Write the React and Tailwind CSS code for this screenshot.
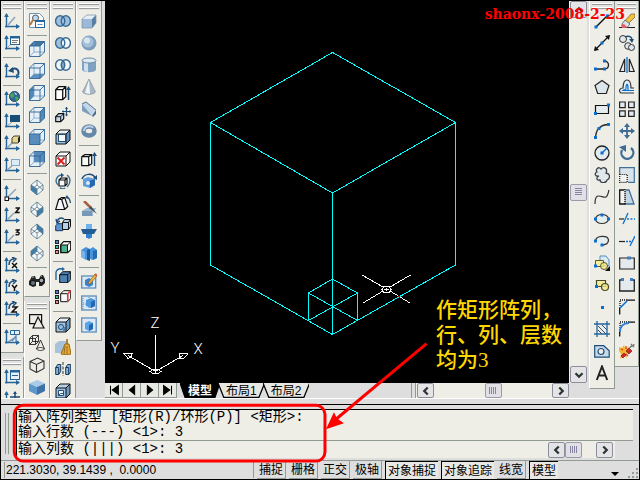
import { useState } from 'react'

const NAVY = '#1f4e79'
const AXIS = '#24659b'
const MID = '#5b8fbe'
const LIGHT = '#c3daee'
const PALE = '#e6f0f8'
const DOT = '#0b6fd0'

// ---------- shared icon parts ----------

function Axes({ children }) {
  return (
    <>
      <path d="M2.500 1v13.500M1 13.500h14" stroke={AXIS} strokeWidth="1.400" />
      <path d="M0.200 4L2.500 0l2.300 4zM12 11l4 2.500-4 2.500z" fill={AXIS} />
      {children}
    </>
  )
}

function Cube({ fill = 'none', top = fill, side = fill, front = fill, line = '#111' }) {
  return (
    <>
      <path d="M1 5l4-4h10l-4 4z" fill={top} />
      <path d="M11 5l4-4v10l-4 4z" fill={side} />
      <path d="M1 5h10v10H1z" fill={front} />
      <path d="M1 5l4-4h10v10l-4 4H1zM1 5h10v10M11 5l4-4" fill="none" stroke={line} strokeLinejoin="round" />
    </>
  )
}

function ViewCube({ shade, d }) {
  return (
    <>
      <path d="M.5 5l4.500-4.500h10.500V11L11 15.500H.5z" fill={PALE} />
      <path d={d} fill={shade} opacity=".9" />
      <path d="M5 .5V11h10.500M5 11L.5 15.500" stroke="#6d97bb" strokeWidth=".7" fill="none" />
      <path d="M.5 5L5 .5h10.500V11L11 15.500H.5zM.5 5H11v10.500M11 5L15.500.5" fill="none" stroke="#2f628f" strokeWidth=".9" />
    </>
  )
}

function IsoCube({ d }) {
  return (
    <>
      <path d="M8 1l6 5v5l-6 5-6-5V6z" fill="#f5f8fa" />
      <path d={d} fill="#3f7fae" />
      <path d="M8 1l6 5v5l-6 5-6-5V6zM2 6l6 4 6-4M8 10v6M8 1v5M2 11l6-5 6 5" fill="none" stroke="#527285" strokeWidth=".8" />
    </>
  )
}

function Rings({ left, right, mid }) {
  return (
    <>
      <circle cx="5" cy="8" r="4.800" fill={left} />
      <circle cx="11" cy="8" r="4.800" fill={right} />
      <path d="M8 4.300a4.800 4.800 0 010 7.400 4.800 4.800 0 010-7.400z" fill={mid} />
      <g fill="none" stroke="#376895" strokeWidth="1.400">
        <ellipse cx="5.200" cy="8" rx="4.600" ry="5.200" />
        <ellipse cx="10.800" cy="8" rx="4.600" ry="5.200" />
      </g>
    </>
  )
}

function Dots({ points }) {
  return points.map(([x, y]) => <rect key={`${x}-${y}`} x={x - 1.5} y={y - 1.5} width="3" height="3" fill={DOT} />)
}

function Spin({ letter }) {
  return (
    <Axes>
      <path d="M5 8c0-4 2-6 5-6M8 0l4 2-3 3" fill="none" stroke={NAVY} strokeWidth="1.500" />
      {letter === 'x' && <path d="M8 6l5 5M13 6l-5 5" stroke="#111" strokeWidth="1.500" />}
      {letter === 'y' && <path d="M8 6l2.500 3L13 6M10.500 9v3" stroke="#111" strokeWidth="1.500" fill="none" />}
      {letter === 'z' && <path d="M8 6h5l-5 5h5" stroke="#111" strokeWidth="1.500" fill="none" />}
    </Axes>
  )
}

function Swatches() {
  return (
    <g strokeWidth="1" stroke="#222">
      <rect x=".5" y="1.500" width="3" height="3" fill="#3b8de0" />
      <rect x=".5" y="6.500" width="3" height="3" fill="#35c09a" />
      <rect x=".5" y="11.500" width="3" height="3" fill="#f3878c" />
    </g>
  )
}

// ---------- toolbars: null is a separator ----------

const ucsTools = [
  ['UCS', <Axes><path d="M4 12l7-8" stroke="#8aa3b8" strokeWidth="1.500" /></Axes>],
  ['Display UCS', <Axes><path d="M3 13l4-4" stroke="#8aa3b8" /><rect x="6.500" y="1.500" width="9" height="8" fill="#fff" stroke={AXIS} /><path d="M6 2.500h10" stroke={AXIS} strokeWidth="2" /><path d="M8 5.500h6M8 7.500h5" stroke="#777" /></Axes>],
  null,
  ['UCS previous', <Axes><path d="M14 12c2-6-3-8-7-5" fill="none" stroke={NAVY} strokeWidth="2" /><path d="M4 8l5-4 1 6z" fill={NAVY} /></Axes>],
  null,
  ['World UCS', <Axes><circle cx="10.500" cy="5.500" r="5" fill="#2d6a9f" stroke="#254663" /><path d="M6 4c2-3 4-2 4 0s-1 3-3 3zM11 6c3-1 4 0 3 3l-2 1z" fill="#4da64c" /><path d="M10 1l3 2-1 1z" fill="#fff" /></Axes>],
  ['Object UCS', <Axes><rect x="6" y="2" width="10" height="7" fill="#184d78" /><path d="M3 13l5-4" stroke="#8aa3b8" /></Axes>],
  ['Face UCS', <Axes><path d="M3 13l6-6" stroke="#8aa3b8" strokeWidth="1.400" /><path d="M8 3l2-2h6v5l-2 2H8z" fill="#e7d68a" stroke="#444" /><path d="M14 3l2-2v5l-2 2z" fill="#222" /></Axes>],
  ['View UCS', <Axes><path d="M3 13l5-4" stroke="#8aa3b8" strokeWidth="1.400" /><rect x="7.500" y="2.500" width="8" height="6" fill="#dcebf7" stroke="#7ca6cb" /></Axes>],
  null,
  ['Origin UCS', <Axes><path d="M4 12l8-8" stroke="#8aa3b8" strokeWidth="1.400" /><rect x="1" y="12" width="3.500" height="3.500" fill="#fff" stroke="#111" /></Axes>],
  ['Z axis vector', <Axes><path d="M4 12l6-6" stroke="#8aa3b8" strokeWidth="1.400" /><path d="M11.500 1H15.200l-3.500 4.500H15.700" fill="none" stroke="#111" strokeWidth="1.500" /></Axes>],
  ['3 point UCS', <Axes><path d="M4 12l6-6" stroke="#8aa3b8" strokeWidth="1.400" /><path d="M11.500 1H15l-2 2c3.500 0 2.500 4-1.500 2.500" fill="none" stroke="#111" strokeWidth="1.400" /></Axes>],
  null,
  ['X rotate UCS', <Spin letter="x" />],
  ['Y rotate UCS', <Spin letter="y" />],
  ['Z rotate UCS', <Spin letter="z" />],
  null,
  ['Apply UCS', <Axes><path d="M6.500 1.500h9v4h-9zM10.500 1.500v4" fill="#e5f0f8" stroke={AXIS} /><path d="M4 13l8-5M8 12l4-5v6" stroke={MID} fill="none" strokeWidth="1.400" /></Axes>],
]

const ucsTools2 = [
  ['Named UCS', <Axes><rect x="6.500" y="1.500" width="9" height="9" fill="#e9f2f9" stroke={AXIS} /><path d="M6 2.500h10" stroke={AXIS} strokeWidth="2" /><path d="M8 6.500h6" stroke={AXIS} /></Axes>],
  ['Move UCS', <Axes><path d="M11 1v10M6 6h10" stroke={NAVY} strokeWidth="1.500" /><path d="M9 3l2-3 2 3zM9 9l2 3 2-3z" fill={NAVY} /></Axes>],
]

const viewTools = [
  ['Named views', <><path d="M.5.5h10l4 4v10H.5z" fill="#f8fbfd" stroke="#6d93b5" /><circle cx="6.500" cy="5" r="3" fill={LIGHT} stroke="#555" /><path d="M4 7l-3 5" stroke="#b9783d" strokeWidth="2" /><rect x="6.500" y="7.500" width="9" height="7" fill="#fff" stroke={AXIS} /><path d="M6 8h10" stroke={AXIS} strokeWidth="2" /><path d="M8.500 11.500h5" stroke={MID} /></>],
  null,
  ['Top', <ViewCube shade="#2f6898" d="M.5 5L5 .5h10.500L11 5z" />],
  ['Bottom', <ViewCube shade="#4d86b8" d="M.5 15.500L5 11h10.500L11 15.500z" />],
  ['Left', <ViewCube shade="#3f7cb0" d="M.5 5L5 .5V11L.5 15.500z" />],
  ['Right', <ViewCube shade="#3f7cb0" d="M11 5L15.500.5V11L11 15.500z" />],
  ['Front', <ViewCube shade="#4580b6" d="M.5 5H11v10.500H.5z" />],
  ['Back', <ViewCube shade="#4580b6" d="M5 .5h10.500V11H5z" />],
  null,
  ['SW isometric', <IsoCube d="M2 6l6 4v6l-6-5z" />],
  ['SE isometric', <IsoCube d="M8 10l6-4v5l-6 5z" />],
  ['NE isometric', <IsoCube d="M8 1l6 5v5l-6-5z" />],
  ['NW isometric', <IsoCube d="M8 1v5l-6 5V6z" />],
  null,
  ['Camera', <><path d="M1 7l2-4h3l1 3h3l2-4h2l2 4v4l-3 3h-3V9H7v4l-3 1-4-2V8z" fill="#242424" /><circle cx="4" cy="10" r="2.600" fill="#5f7078" stroke="#111" /><circle cx="12.500" cy="7.500" r="2.300" fill="#9ba8b0" stroke="#111" /><path d="M3 4h2M12 3h1" stroke="#b6c5cf" /></>],
]

const styleTools = [
  ['2D wireframe', <g fill="none" stroke="#111" strokeWidth="1.200"><path d="M.6 1.600h12v9H.6z" /><path d="M9 4l6 11H4z" fill="#eeede6" /></g>],
  ['3D wireframe', <g fill="none" stroke="#222" strokeWidth=".9"><path d="M.5 3.500l3-3h6v6l-3 3h-6zM.5 3.500h6v6M6.500 3.500l3-3M3.500.5v6h6M3.500 6.500l-3 3" /><path d="M11.500 5l4 9c-2 2-6 2-8 0zM7.500 14c2-2 6-2 8 0" /></g>],
  ['Hidden', <path d="M1 4.500L8.500 1 15 4v7.500L7.500 15.500 1 12zM1 4.500l6.500 3L15 4M7.500 7.500v8" fill="none" stroke="#333" strokeWidth="1.100" />],
  ['Realistic', <><path d="M0 4.500L8.500 1 16 4.500 8 8z" fill="#a9cbe8" /><path d="M0 4.500L8 8v8l-8-4z" fill="#5e97ca" /><path d="M16 4.500L8 8v8l8-4z" fill="#3f73a8" /></>],
]

const editTools = [
  ['Union', <Rings left="#9fc0dd" right="#9fc0dd" mid="#9fc0dd" />],
  ['Subtract', <Rings left="#9fc0dd" right="#f4f7f8" mid="#f4f7f8" />],
  ['Intersect', <Rings left="#f4f7f8" right="#f4f7f8" mid="#7ba7ce" />],
  null,
  ['Extrude faces', <><path d="M.7 4.700l3-3h7v10l-3 3h-7z M.7 4.700h7v10M7.700 4.700l3-3" fill="#fff" stroke="#111" strokeWidth="1.300" /><path d="M13.500 15V4" stroke={NAVY} strokeWidth="1.500" /><path d="M11 5l2.500-4L16 5z" fill={NAVY} /></>],
  ['Move faces', <><path d="M.7 9.700l3-3h5v5l-3 3h-5z" fill={LIGHT} stroke="#111" strokeWidth="1.200" /><path d="M.7 9.700h5v5M5.700 9.700l3-3" fill="none" stroke="#111" /><path d="M11.500 0v9M7 4.500h9" stroke={NAVY} strokeWidth="1.200" /><path d="M10 2l1.500-2L13 2zM10 7.500l1.500 2 1.500-2zM14.500 3L16 4.500 14.500 6zM8.500 3L7 4.500 8.500 6z" fill={NAVY} /></>],
  ['Offset faces', <><Cube front="#9bbfdf" top="#e9f1f7" side="#5b8fbe" /><rect x="3.500" y="5.500" width="7" height="7" fill="#f6f8fa" stroke={NAVY} /></>],
  ['Delete faces', <><Cube fill="#fafafa" /><path d="M2.500 6.500l7 7M9.500 6.500l-7 7" stroke="#e32222" strokeWidth="2" /></>],
  ['Rotate faces', <><path d="M4 7l2-2h6v6l-2 2H4zM4 7h6v6M10 7l2-2" fill="#f7f9fa" stroke="#111" strokeWidth="1.200" /><path d="M3 12C-1 8 2 2 7 2M12 2c4 3 4 8 0 12M5 15c2 1 4 1 5 0" fill="none" stroke="#3d7099" strokeWidth="1.400" /><path d="M6 0l3 2-3 3z" fill={NAVY} /></>],
  ['Taper faces', <><path d="M.7 14.500l3-10 3-2h3l3 9-3 3zM3.700 4.500h3l3 10M6.700 4.500l3-2" fill="#f5f8fa" stroke="#111" strokeWidth="1.200" /><path d="M11 2c3 0 4 3 4.500 6" fill="none" stroke={NAVY} strokeWidth="1.300" /><path d="M12 0l-2 3 4 1z" fill={NAVY} /></>],
  ['Copy faces', <><path d="M.7 8.700l2-2h5v7H.7z" fill="#5b94cf" stroke="#183a63" /><path d="M7.500 5.500l2-3h6v7l-2 3h-6z" fill="#b4d0ea" stroke="#111" /><path d="M7.500 5.500h6v7M13.500 5.500l2-3" fill="none" stroke="#111" /><path d="M2 5c1-4 4-5 7-3M1 2l1 4 3-2" fill="none" stroke={NAVY} strokeWidth="1.400" /></>],
  ['Color faces', <><Swatches /><path d="M5.700 5.700l3-3h7v8l-3 3h-7z" fill="#fafafa" stroke="#111" strokeWidth="1.200" /><path d="M6 6h6.500v7.500H6z" fill="#4bb08b" stroke="#111" /><path d="M12.500 6l3-3" stroke="#111" /></>],
  null,
  ['Copy edges', <><path d="M4.700 7.700l3-3h8v8l-3 3h-8z" fill="#4d82b4" stroke="#111" /><path d="M4.700 7.700h8v8M12.700 7.700l3-3" fill="none" stroke="#111" /><path d="M1 13V5M1 5c1-3 3-4 7-3" fill="none" stroke={AXIS} strokeWidth="1.400" /><path d="M7 0l3 2-3 2z" fill={AXIS} /></>],
  ['Color edges', <><Swatches /><path d="M5.700 4.700l3-3h7v8l-3 3h-7zM5.700 4.700h7v8" fill="#fafafa" stroke="#111" /><path d="M12.700 12.700v-8l3-3" stroke="#e33" strokeWidth="1.500" fill="none" /></>],
  null,
  ['Imprint', <><Cube front="#9cc1df" top={PALE} side="#6a9cc6" /><circle cx="6" cy="10" r="2.500" fill="none" stroke={NAVY} /><path d="M8 13h2v-3" stroke={NAVY} fill="none" /></>],
  ['Clean', <><path d="M0 5l4-3h9v8l-4 4H0z" fill="#a8c2da" /><path d="M12 0v5" stroke="#a06a20" strokeWidth="1.500" /><path d="M10 5h4l2 10c-3 1-7 1-10 0z" fill="#e5ab36" stroke="#99691b" /><path d="M9 15l1-8M12 15V7" stroke="#9b6d1c" /></>],
  ['Separate', <><path d="M.7 6.500l2-3h3v7l-2 3h-3zM.7 6.500h3v7" fill="#8ab4da" stroke="#153a5e" /><path d="M10.700 6.500l2-3h3v7l-2 3h-3zM10.700 6.500h3v7" fill="#8ab4da" stroke="#153a5e" /><path d="M8 1v14" stroke="#333" strokeDasharray="3 1.500" /></>],
  ['Shell', <><Cube front="#9cc1df" top="#b7d0e5" side="#6a9cc6" /><path d="M3.500 7.500h5v5h-5z" fill="#f3f6f8" stroke={NAVY} /><path d="M3.500 12.500l2-2h3" stroke={NAVY} fill="none" /></>],
]

const solidTools = [
  ['Box', <><path d="M1 6l5-4h9l-4 4z" fill="#e5eef6" /><path d="M1 6h10v9H1z" fill="#9bb9d6" /><path d="M11 6l4-4v8l-4 5z" fill="#557da6" /><path d="M1 6l5-4h9v8l-4 5H1z" fill="none" stroke="#7991a8" strokeWidth=".7" /></>],
  ['Sphere', <><circle cx="8" cy="8" r="7.500" fill="#7c9dbd" /><circle cx="7" cy="7" r="5.600" fill="#a4bfd8" /><circle cx="6" cy="5.500" r="3" fill="#d7e5f0" /></>],
  ['Cylinder', <><path d="M1 3v10c2 3 12 3 14 0V3z" fill="#7fa1c2" /><path d="M3 4h4v11C5 15 3 14 3 13z" fill="#d2e0ed" /><ellipse cx="8" cy="3.500" rx="7" ry="2.500" fill="#dfe9f2" stroke="#6d8dab" /></>],
  ['Cone', <><path d="M8 0l6.500 13c-2 3-11 3-13 0z" fill="#a9b8c5" /><path d="M8 0L4 14c2 1 3 1 5 1z" fill="#eff4f7" /><path d="M8 0l6.500 13c-2 3-11 3-13 0z" fill="none" stroke="#7f8f9c" strokeWidth=".7" /></>],
  ['Wedge', <><path d="M1 3l4-2 10 8-4 6z" fill="#c3d7e8" /><path d="M1 3v7l10 5z" fill="#7d9dbc" /><path d="M11 15l4-6v4l-3 3z" fill="#47698b" /><path d="M1 3l4-2 10 8" fill="none" stroke="#516f8c" /></>],
  ['Torus', <><ellipse cx="8" cy="8" rx="5.500" ry="4.500" fill="none" stroke="#6588aa" strokeWidth="4.500" /><path d="M3 8c0-5 7-6 9-3" fill="none" stroke="#bfd3e5" strokeWidth="2" /></>],
  null,
  ['Extrude', <><path d="M.7 5.700l3-2h7v9l-3 2h-7zM.7 5.700h7v9M7.700 5.700l3-2" fill="#f7f9fa" stroke="#111" strokeWidth="1.200" /><path d="M13.500 15V4" stroke={NAVY} strokeWidth="1.400" /><path d="M11 5l2.500-4L16 5z" fill={NAVY} /></>],
  ['Revolve', <><path d="M2 6l5-2 7 2v6l-5 3-7-2z" fill="#5e9edc" /><path d="M8 8l6-2v6l-5 3z" fill="#2467b3" /><circle cx="7" cy="10" r="2" fill="#dcebf7" /><path d="M1 6c2-6 11-6 13-1" fill="none" stroke={NAVY} strokeWidth="1.500" /><path d="M16 2v5l-4-2z" fill={NAVY} /></>],
  null,
  ['Slice', <><path d="M1 10l5-3h9l-3 5v3H1z" fill="#9ab6d0" /><path d="M1 10h10v5H1z" fill="#7898b7" /><path d="M3 0l7 7" stroke="#a85c41" strokeWidth="2.500" /><path d="M8 7l2-2 6 8z" fill="#474f57" /></>],
  ['Section', <><path d="M5 1h6v14H5z" fill="#4d9ae0" /><path d="M0 6h16l-3 5H2z" fill="#235d94" /><path d="M5 1h6v5H5z" fill="#6db2ec" /><path d="M5 11h6v3l-3 2-3-2z" fill="#2f80cf" /></>],
  ['Interfere', <><path d="M0 5l5-3 4 2 3-2 4 3v8l-5 2-3-2-3 2-5-3z" fill="#4692dc" /><path d="M6 5l3-1v12l-3-1z" fill="#1e5796" /><path d="M0 5l4 2v7l-4-2z" fill="#77b4ec" /><path d="M12 6l4-1v8l-4 2z" fill="#2869b1" /></>],
  null,
  ['Setup drawing', <><rect x=".7" y="3" width="14" height="12" fill="#dce9f4" stroke={MID} strokeWidth="1.300" /><path d="M4 7l4-2 4 2v5l-4 2-4-2z" fill="#3b82c9" /><path d="M7 10l7-9 2 2-7 8z" fill="#edb23e" stroke="#8a5a1b" strokeWidth=".6" /><path d="M14 1l2 2" stroke="#dc5a3a" strokeWidth="2" /></>],
  ['Setup view', <><rect x=".7" y="1" width="14.500" height="14" fill="#dce9f4" stroke={MID} strokeWidth="1.300" /><path d="M2 3v11M2 9h12M8 2v12" stroke={MID} strokeDasharray="1 1" /><path d="M5 5l5-2 4 2v6l-4 2-5-2z" fill="#4c98dc" /><path d="M10 7l4-2v6l-4 2z" fill="#2469b0" /></>],
  ['Setup profile', <><rect x=".7" y="1" width="14.500" height="14" fill="#dce9f4" stroke={MID} strokeWidth="1.300" /><path d="M4 6l4-2 4 2v6l-4 2-4-2z" fill="#59a4e4" /><path d="M8 8l4-2v6l-4 2z" fill="#1f68b4" /></>],
]

const drawTools = [
  ['Line', <><path d="M2 14L14 2" stroke="#111" strokeWidth="1.400" /><Dots points={[[2, 14], [13.5, 3]]} /></>],
  ['Construction line', <><path d="M1 15L15 1" stroke="#111" strokeWidth="1.300" /><path d="M0 16l1-5 4 4zM16 0l-5 1 4 4z" fill="#111" /><Dots points={[[8, 8]]} /></>],
  ['Polyline', <><path d="M2 12h8c6 0 6-8 0-8" fill="none" stroke="#222" strokeWidth="1.300" /><Dots points={[[1.5, 12], [10.5, 12], [10.5, 4]]} /></>],
  ['Polygon', <path d="M8 1.500l7 5-2.700 8H3.700L1 6.500z" fill="#dce6ec" stroke="#222" strokeWidth="1.200" />],
  ['Rectangle', <><path d="M1.500 4.500h13v8h-13z" fill="#e5ebef" stroke="#111" strokeWidth="1.200" /><Dots points={[[1.5, 12.5], [14.5, 4]]} /></>],
  ['Arc', <><path d="M1.500 14C2 7 6 2 14 1.500" fill="none" stroke="#333" strokeWidth="1.300" /><Dots points={[[1.5, 14.5], [5, 5.5], [14.5, 1.5]]} /></>],
  ['Circle', <><circle cx="8" cy="8" r="7" fill="#e2eaef" stroke="#222" strokeWidth="1.300" /><path d="M8 8l5-5" stroke={DOT} strokeWidth="1.500" /><Dots points={[[8, 8]]} /></>],
  ['Revision cloud', <path d="M5 9C1 10 0 6 3 5 1 2 5-1 7 2c3-3 7 0 5 4 5 1 4 6 1 7-1 4-7 3-7 0-4 1-4-3-1-4z" fill="#e1e7ea" stroke="#3a4147" strokeWidth="1.300" />],
  ['Spline', <path d="M1 15C1 1 9 10 12 8c2-1 2-4 3-7" fill="none" stroke="#333" strokeWidth="1.200" />],
  ['Ellipse', <><ellipse cx="8" cy="8" rx="6.500" ry="4.500" fill="#e6edf0" stroke="#333" strokeWidth="1.200" /><Dots points={[[1.5, 8], [8, 4], [14.5, 8]]} /></>],
  ['Ellipse arc', <><path d="M1.500 8C2 2 14 2 14.500 7c0 4-3 5-7 5" fill="#e6edf0" stroke="#333" strokeWidth="1.300" /><Dots points={[[1.5, 8], [8, 12]]} /></>],
  ['Insert block', <><path d="M6 1h6l3 4v6H6z" fill="#dbe9f4" stroke={MID} /><path d="M1.500 5.500h8v6h-8z" fill="#f5ee9a" stroke="#5c5a28" /><circle cx="10" cy="11" r="3.500" fill="#f3e986" fillOpacity=".8" stroke="#5c5a28" /><Dots points={[[1.5, 11]]} /><path d="M16 11v5h-5z" fill="#111" /></>],
  ['Make block', <><path d="M2.500 3.500h9v6h-9z" fill="#f5ee9a" stroke="#484a2a" strokeWidth="1.200" /><circle cx="11" cy="10" r="3.500" fill="#f3e986" fillOpacity=".8" stroke="#484a2a" strokeWidth="1.200" /><Dots points={[[2.5, 9.5]]} /></>],
  ['Point', <Dots points={[[8.5, 8.5]]} />],
  ['Hatch', <><path d="M3 3h10v10H3z" fill="#e5eef4" /><path d="M4 9l4 4M4 5l8 8M8 4l5 5" stroke="#222" strokeWidth=".8" /><path d="M3 0v16M13 0v16M0 3h16M0 13h16" stroke={AXIS} strokeWidth="1.300" /></>],
  ['Region', <><path d="M.7 2.700h9l5.500 5v6.500H.7z" fill="#c9dbea" stroke={NAVY} strokeWidth="1.200" /><circle cx="7" cy="8.500" r="3" fill="#eeede6" stroke={NAVY} strokeWidth="1.200" /></>],
  ['Multiline text', <path d="M2.800 15L8 1.500 13.200 15M4.800 10.500h6.400" fill="none" stroke="#222" strokeWidth="2" />],
]

const modifyTools = [
  ['Erase', <><path d="M0 14.500h16" stroke="#222" /><path d="M5 9L12 1h4v3l-8 8z" fill="#efc23f" stroke="#745b25" strokeWidth=".7" /><path d="M3 11l3-4 5 4-3 3.500H5z" fill="#d7e3ee" stroke="#555" strokeWidth=".8" /><path d="M2 12l3-1 3 3-2 1H3z" fill="#e35d62" /></>],
  ['Copy', <><circle cx="4" cy="4" r="3.500" fill="#e1e8ed" stroke="#333" /><circle cx="9" cy="11" r="3.300" fill="#e1e8ed" stroke="#333" /><circle cx="12.500" cy="12.500" r="3" fill="#dce6ec" stroke="#333" /><path d="M6 2c4-2 7 0 7 3" fill="none" stroke={NAVY} strokeWidth="1.500" /><path d="M10 4h5l-2 4z" fill={NAVY} /></>],
  ['Mirror', <><path d="M.7 14.500h5V2zM15.300 14.500h-5V2z" fill="#e2e9ed" stroke="#222" strokeWidth="1.200" /><path d="M8 0v16" stroke={DOT} strokeWidth="1.300" /></>],
  ['Offset', <><path d="M15 14H2c-3-2-1-5 2-5C4 3 6 1 8 1s4 2 4 8h3" fill="#e2edf4" stroke="#333" strokeWidth="1.200" /><path d="M15 11.500H4c1-1 3 0 3-2 0-5 2-6 2 0v2" fill="none" stroke={DOT} strokeWidth="1.200" /></>],
  ['Array', <g fill="#e2eaef" stroke="#222" strokeWidth="1.200"><path d="M.6 1h5.600v5.600H.6zM9.600 1h5.600v5.600H9.600zM.6 9.800h5.600v5.600H.6zM9.600 9.800h5.600v5.600H9.600z" /></g>],
  ['Move', <><path d="M8 2v12M2 8h12" stroke="#3d6c94" strokeWidth="1.800" /><path d="M5 4l3-4 3 4zM5 12l3 4 3-4zM4 5L0 8l4 3zM12 5l4 3-4 3z" fill="#3d6c94" /></>],
  ['Rotate', <><path d="M12 3a6 6 0 11-9 2" fill="none" stroke="#3d6c94" strokeWidth="2.300" /><path d="M0 2l7-2v7z" fill="#3d6c94" /></>],
  ['Scale', <><path d="M.7 .7h14.600v14.600H.7z" fill="#d8e3ea" /><path d="M.7 7V.7h14.600v14.600H9" fill="none" stroke="#40719b" strokeWidth="1.200" /><path d="M.7 7.500h7.500v7.800H.7z" fill="#f3f4f2" stroke="#111" strokeDasharray="1 1" strokeWidth="1.200" /></>],
  ['Stretch', <><path d="M6 1h4l5 14H6z" fill="#c4d6e4" stroke="#40719b" strokeWidth="1.300" /><path d="M.7 1H6v14H.7z" fill="#f3f4f2" stroke="#111" strokeWidth="1.300" /><path d="M6 1v14" stroke="#fff" strokeDasharray="1 1" strokeWidth="1.300" /></>],
  ['Trim', <><path d="M0 8h5" stroke="#222" strokeWidth="1.200" /><path d="M8 8h8" stroke={DOT} strokeDasharray="2 1.500" strokeWidth="1.300" /><path d="M4 13l5-11" stroke={DOT} strokeWidth="1.300" /></>],
  ['Extend', <><path d="M0 8.500h6" stroke="#222" strokeWidth="1.200" /><path d="M7 8.500h5" stroke={DOT} strokeDasharray="2 1" strokeWidth="1.300" /><path d="M11 13l5-10" stroke={DOT} strokeWidth="1.300" /></>],
  ['Break at point', <><path d="M.7 3h14.600v11H.7z" fill="#e5eaed" stroke="#222" strokeWidth="1.200" /><rect x="8" y="1.500" width="4" height="3" fill="#407dc1" /></>],
  ['Break', <><path d="M1 3h14v11H1z" fill="#e5eaed" /><path d="M2.500 3H.7v11h14.600V3h-2" fill="none" stroke="#222" strokeWidth="1.300" /><rect x="2" y="1" width="3" height="3" fill="#407dc1" /><rect x="11" y="1" width="3" height="3" fill="#407dc1" /></>],
  ['Chamfer', <><path d="M1 9V1h7" fill="none" stroke="#111" strokeDasharray="1 1" strokeWidth="1.300" /><path d="M.7 15.500V9M8 1.200h8" fill="none" stroke="#111" strokeWidth="1.300" /><path d="M1 9l7-7" stroke={DOT} strokeWidth="1.600" /></>],
  ['Fillet', <><path d="M1 11V1h9" fill="none" stroke="#111" strokeDasharray="1 1" strokeWidth="1.300" /><path d="M.7 15.500V11M10 1.200h6" fill="none" stroke="#111" strokeWidth="1.300" /><path d="M1 11c0-6 4-9 9-9" fill="none" stroke="#2d7bd6" strokeWidth="2" /></>],
  ['Explode', <><path d="M0 4l3 1 2-3 1 3 4-1-2 4 3 2-4 1 1 4-3-2-4 3 1-5-2-3z" fill="#f4b52f" /><path d="M2 6l2 1M7 3v3M9 13l-2-2" stroke="#e32f25" strokeWidth="1.200" /><path d="M2 13l3-3 2 2-3 3zM7 8l3-3 3 3-3 3z" fill="#d22a22" stroke="#5b1412" strokeWidth=".6" /><path d="M11 5c0-3 4-1 4-4M12 1l1 1M15 4l-1-1" fill="none" stroke="#777" strokeWidth="1.400" /></>],
]

function ToolGroup({ label, tools, className = '' }) {
  return (
    <div
      role="toolbar"
      aria-label={label}
      className={`shrink-0 border-r border-b border-r-[#929a94] border-b-[#929a94] bg-[#eeede6] pb-1 ${className}`}
    >
      <div className="flex h-[9px] flex-col justify-center gap-[2px] bg-[#e2e2e0] px-0.5">
        <span className="h-[2px] border-b border-[#9a9a9a] bg-white" />
        <span className="h-[2px] border-b border-[#9a9a9a] bg-white" />
      </div>
      {tools.map((tool, i) =>
        tool ? (
          <button key={tool[0]} type="button" aria-label={tool[0]} className="flex h-[22px] w-full items-center justify-center">
            <svg viewBox="0 0 16 16" className="size-4 shrink-0">{tool[1]}</svg>
          </button>
        ) : (
          <div key={i} className="mx-0.5 flex h-1.5 items-center">
            <span className="h-px w-full bg-[#929a94]" />
          </div>
        )
      )}
    </div>
  )
}

const CHEVRONS = {
  up: 'M4 10l4-4 4 4',
  down: 'M4 6l4 4 4-4',
  left: 'M10 4L6 8l4 4',
  right: 'M6 4l4 4-4 4',
}

function ScrollButton({ dir, className = 'size-[17px]' }) {
  return (
    <button
      type="button"
      aria-label={`Scroll ${dir}`}
      className={`flex shrink-0 items-center justify-center rounded-[2px] border border-[#8e8d9c] bg-[#e4e4e6] ${className}`}
    >
      <svg viewBox="0 0 16 16" className="size-[14px]">
        <path d={CHEVRONS[dir]} fill="none" stroke="#2c3434" strokeWidth="2.600" />
      </svg>
    </button>
  )
}

function Thumb({ vertical = false, className = 'size-[17px]' }) {
  return (
    <div className={`flex shrink-0 items-center justify-center rounded-[2px] border border-[#9b9aa8] bg-[#e0e0e6] ${className}`}>
      <svg viewBox="0 0 8 8" className="size-2">
        <path
          d={vertical ? 'M0 .5h7M0 2.500h7M0 4.500h7M0 6.500h7' : 'M.5 0v7M2.500 0v7M4.500 0v7M6.500 0v7'}
          stroke="#8684a0"
        />
      </svg>
    </div>
  )
}

function Drawing() {
  return (
    <svg viewBox="105 1 464 382" className="absolute inset-0 size-full" fill="none" shapeRendering="crispEdges">
      <g stroke="#00ffff">
        <path d="M332.500 52.500L455.500 122.500V265L332.500 334.500 210.500 265V122.500z" />
        <path d="M210.500 122.500L332.500 193 455.500 122.500M332.500 193V334" />
        <path d="M308.500 320.500V293L332.500 279 357.500 293V320.500" />
        <path d="M308.500 293L357.500 320.500M357.500 293L308.500 320.500" />
      </g>
      <g stroke="#fff">
        <path d="M362 275L383 287M410.500 275L390 287M363 303L383 291M410 303L390 291" />
        <path d="M384 286.500h5l2 3-2 3h-5l-2-3zM384 289.500h5M386.500 288v3" />
      </g>
      <path d="M398 296.500h2" stroke="#f00" />
      <g stroke="#fff">
        <path d="M155.500 335V374M155.500 371.500L128 355.500M155.500 371.500L183 355.500" />
        <path d="M150 371.500l3-2h5l3 2-3 2h-5z" />
        <path d="M124 353.500h8l-1 3-3 2zM179 354l5-1 4 1-5 5-4-1z" />
      </g>
      <g fill="#fff" stroke="none" textAnchor="middle" className="font-['Roboto',sans-serif] text-[15px] font-light">
        <text x="155" y="328">Z</text>
        <text x="198" y="354">X</text>
        <text x="115" y="353">Y</text>
      </g>
    </svg>
  )
}

const NAV = [
  ['First', 'M4 3v10M13 3v10L6 8z'],
  ['Previous', 'M11 3v10L5 8z'],
  ['Next', 'M5 3v10l6-5z'],
  ['Last', 'M3 3v10l7-5zM12 3v10'],
]

const TABS = ['模型', '布局1', '布局2']

function LayoutTabs() {
  const [active, setActive] = useState('模型')
  return (
    <div className="flex h-[15px] shrink-0 items-stretch bg-[#dedede]">
      {NAV.map(([name, d]) => (
        <button key={name} type="button" aria-label={name} className="flex w-[18px] items-center justify-center border-r border-b border-[#929a94] bg-[#e8e8e4]">
          <svg viewBox="0 0 16 16" className="size-[14px]">
            <path d={d} fill="#000" stroke="#000" strokeWidth="1.200" />
          </svg>
        </button>
      ))}
      <div role="tablist" className="ml-[3px] flex">
        {TABS.map((tab) => (
          <button
            key={tab}
            type="button"
            role="tab"
            aria-selected={tab === active}
            onClick={() => setActive(tab)}
            className={`relative -mr-0.5 px-2 text-[12px] leading-[14px] ${tab === active ? 'font-bold text-white' : 'text-black'}`}
          >
            <svg viewBox="0 0 48 15" preserveAspectRatio="none" className="absolute inset-0 size-full">
              <path d="M0 0l6 14.500h36L48 0z" fill={tab === active ? '#000' : '#e6e6e2'} />
              <path d="M0 0l6 14.500h36L48 0" fill="none" stroke="#000" strokeWidth="1.300" />
            </svg>
            <span className="relative">{tab}</span>
          </button>
        ))}
      </div>
      <div className="ml-auto flex w-[158px] items-stretch border-l border-[#929a94] bg-[#eeede6]">
        <div className="mr-px w-1 border-r border-[#929a94] bg-[#dedede]" />
        <ScrollButton dir="left" className="w-[17px]" />
        <div className="flex flex-1 justify-center">
          <Thumb className="w-[17px]" />
        </div>
        <ScrollButton dir="right" className="w-[17px]" />
      </div>
    </div>
  )
}

function CommandWindow() {
  const [value, setValue] = useState('3')
  return (
    <section className="flex shrink-0 border-t border-black bg-[#dedede] pt-1 pr-1.5 pb-0.5">
      <div className="my-1 ml-1 flex w-[11px] gap-0.5">
        <span className="w-px bg-[#929a94]" />
        <span className="w-px bg-[#929a94]" />
      </div>
      <div className="min-w-0 flex-1 border-t border-l border-black bg-[#eeede6] font-['Liberation_Mono','Noto_Sans_CJK_SC',monospace] text-[14px] leading-[15px] text-black">
        <div className="border-b border-[#929a94] pl-px whitespace-pre">
          <div className="h-[15px]">{'输入阵列类型 [矩形(R)/环形(P)] <矩形>:'}</div>
          <div className="h-[15px]">{'输入行数 (---) <1>: 3'}</div>
        </div>
        <div className="flex h-[17px] items-center pl-px">
          <label htmlFor="command" className="shrink-0 whitespace-pre">
            {'输入列数 (|||) <1>: '}
          </label>
          <input
            id="command"
            value={value}
            onChange={(e) => setValue(e.target.value)}
            className="min-w-0 flex-1 bg-transparent leading-[15px] outline-none"
          />
          <div className="flex w-[65px] shrink-0">
            <ScrollButton dir="left" className="h-4 w-[17px]" />
            <Thumb className="h-4 w-[17px]" />
            <span className="flex-1" />
            <ScrollButton dir="right" className="h-4 w-[17px]" />
          </div>
          <div className="ml-0.5 h-full w-[18px] shrink-0 bg-[#dedede]" />
        </div>
      </div>
    </section>
  )
}

const MODES = [
  ['捕捉', false],
  ['栅格', false],
  ['正交', false],
  ['极轴', false],
  ['对象捕捉', true],
  ['对象追踪', true],
  ['线宽', false],
  ['模型', true],
]

function StatusBar() {
  const [modes, setModes] = useState(MODES)
  const toggle = (name) => setModes(modes.map(([n, on]) => [n, n === name ? !on : on]))

  return (
    <footer className="flex h-[19px] shrink-0 items-stretch border-t border-[#929a94] bg-[#dedede] text-[12px] text-black">
      <div className="my-px ml-[3px] w-[250px] shrink-0 border-r border-l border-[#929a94] pl-px leading-[17px] whitespace-pre">
        221.3030, 39.1439 ,  0.0000
      </div>
      <div className="ml-[3px] flex items-stretch gap-x-[3px]">
        {modes.map(([name, on]) => (
          <button
            key={name}
            type="button"
            aria-pressed={on}
            onClick={() => toggle(name)}
            className={`px-0.5 leading-[15px] whitespace-nowrap ${
              on
                ? 'border-t border-l border-black bg-[#e8e8e5] pt-px'
                : 'border-r border-b border-[#929a94] pt-0.5'
            }`}
          >
            {name}
          </button>
        ))}
      </div>
      <div className="ml-auto flex items-center gap-2">
        <button type="button" aria-label="Status bar menu">
          <svg viewBox="0 0 8 4" className="mt-2 h-1 w-2"><path d="M0 0h8L4 4z" fill="#000" /></svg>
        </button>
        <svg viewBox="0 0 12 12" className="mt-1.5 size-3">
          <path d="M9 1h2v2H9zM5 5h2v2H5zM9 5h2v2H9zM1 9h2v2H1zM5 9h2v2H5zM9 9h2v2H9z" fill="#929a94" />
        </svg>
      </div>
    </footer>
  )
}

// red frame around the prompts and the arrow that leads to it
function Callout() {
  return (
    <svg viewBox="0 0 640 480" className="pointer-events-none absolute inset-0 size-full">
      <rect x="13" y="406" width="312" height="56" rx="9" fill="none" stroke="#f00" strokeWidth="3" />
      <path d="M427 344L336 420" stroke="#f00" strokeWidth="3" />
      <path d="M326 430l8-17 3 6 7 5z" fill="#f00" />
    </svg>
  )
}

export default function App() {
  return (
    <div className="relative flex h-screen flex-col overflow-hidden border border-black bg-[#dedede] font-['Liberation_Sans','Noto_Sans_CJK_SC',sans-serif]">
      <div className="flex min-h-0 flex-1 overflow-hidden">
        <aside className="flex shrink-0 pr-[3px]">
          <div className="flex w-[23px] flex-col gap-1">
            <ToolGroup label="UCS" tools={ucsTools} />
            <ToolGroup label="UCS II" tools={ucsTools2} />
          </div>
          <div className="flex w-[26px] flex-col gap-1">
            <ToolGroup label="View" tools={viewTools} className="border-l border-l-white" />
            <ToolGroup label="Visual styles" tools={styleTools} className="border-l border-l-white" />
          </div>
          <div className="w-[26px]">
            <ToolGroup label="Solids editing" tools={editTools} className="border-l border-l-white" />
          </div>
          <div className="w-[26px]">
            <ToolGroup label="Solids" tools={solidTools} className="border-l border-l-white" />
          </div>
        </aside>

        <main className="flex min-w-0 flex-1 flex-col">
          <div className="flex min-h-0 flex-1">
            <div className="relative flex-1 bg-black">
              <Drawing />
              <p className="absolute right-[5px] bottom-[10px] w-[128px] font-['Liberation_Serif','Noto_Sans_CJK_SC',serif] text-[21px] leading-[25px] font-medium whitespace-pre text-[#ffd700]">
                {'作矩形阵列，\n行、列、层数\n均为3'}
              </p>
            </div>
            <div className="flex w-[18px] flex-col items-end justify-between bg-[#eeede6]">
              <ScrollButton dir="up" />
              <Thumb vertical />
              <ScrollButton dir="down" />
            </div>
          </div>
          <div className="pr-[18px]">
            <LayoutTabs />
          </div>
        </main>

        <aside className="flex shrink-0 pl-0.5">
          <div className="w-[26px]">
            <ToolGroup label="Draw" tools={drawTools} className="border-l border-l-white" />
          </div>
          <div className="w-6">
            <ToolGroup label="Modify" tools={modifyTools} />
          </div>
        </aside>
      </div>
      <div className="h-[6px] shrink-0 border-t border-white" />
      <CommandWindow />
      <StatusBar />

      <p className="absolute top-1 right-[14px] font-['DejaVu_Serif',serif] text-[14px] leading-[18px] font-bold text-[#f00]">
        shaonx-2008-2-23
      </p>
      <Callout />
    </div>
  )
}
